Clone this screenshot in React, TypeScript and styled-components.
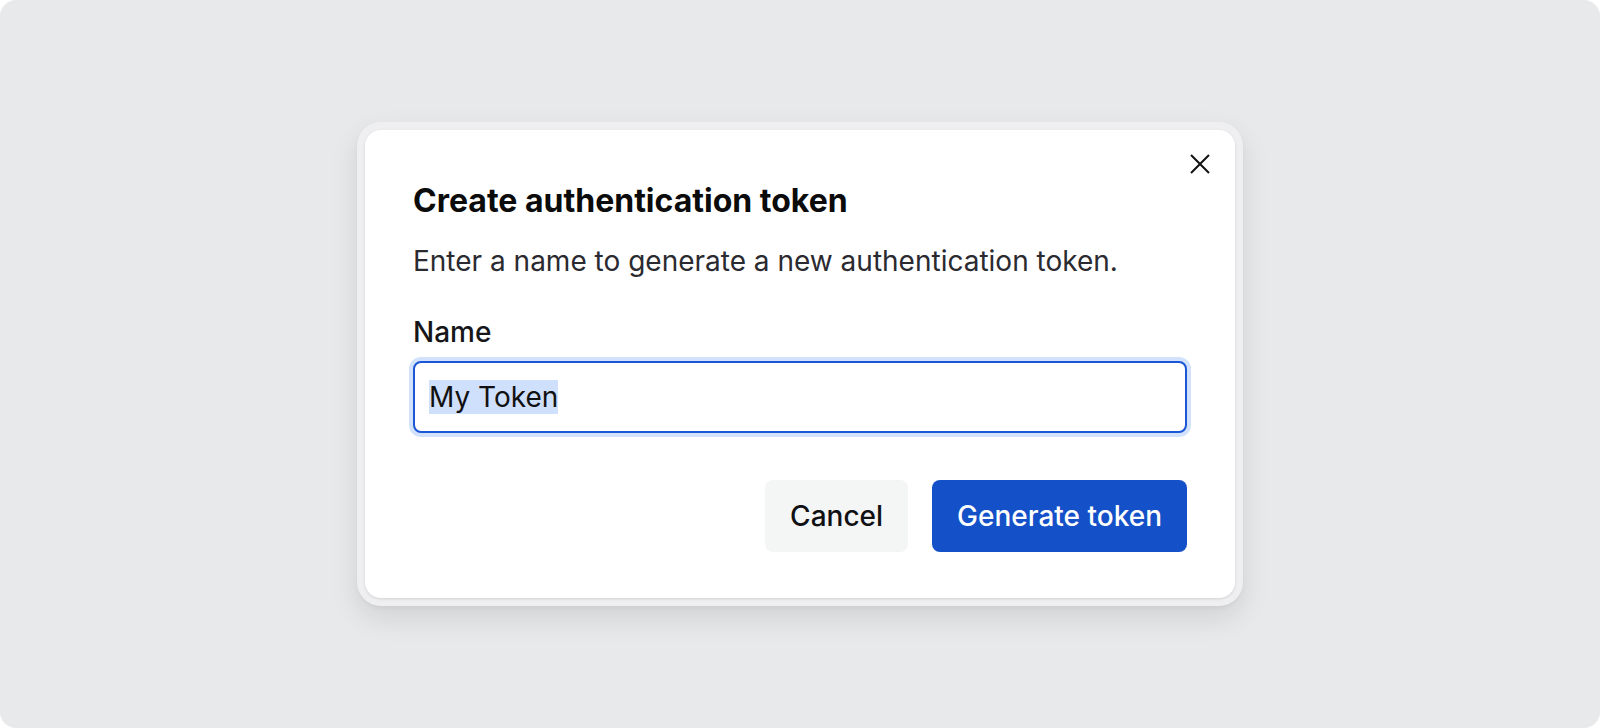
import React from "react";
import styled, { createGlobalStyle } from "styled-components";

const Global = createGlobalStyle`
  html, body { margin: 0; padding: 0; background: #ffffff; }
  body { font-family: Inter, "Noto Sans", sans-serif; }
  * { box-sizing: border-box; }
  #root { width: 1600px; height: 728px; }
  ::selection { background: #cfe0fd; color: #111; }
`;

const Canvas = styled.div`
  width: 1600px;
  height: 728px;
  background: #e8e9eb;
  border-radius: 16px;
  display: flex;
  align-items: center;
  justify-content: center;
`;

const Frame = styled.div`
  padding: 8px;
  border-radius: 24px;
  background: #efeff1;
  box-shadow: 0 12px 28px rgba(0, 0, 0, 0.1), 0 2px 4px rgba(0, 0, 0, 0.04);
`;

const Dialog = styled.div`
  position: relative;
  width: 870px;
  background: #ffffff;
  border-radius: 16px;
  padding: 51px 48px 46px;
  box-shadow: 0 1px 3px rgba(0, 0, 0, 0.12);
  display: flex;
  flex-direction: column;
`;

const CloseButton = styled.button`
  position: absolute;
  top: 21px;
  right: 22px;
  width: 26px;
  height: 26px;
  padding: 0;
  border: none;
  background: transparent;
  display: flex;
  align-items: center;
  justify-content: center;
  cursor: pointer;
`;

const Title = styled.h2`
  margin: 0;
  font-size: 32px;
  line-height: 40px;
  font-weight: 700;
  color: #0b0b0c;
`;

const Description = styled.p`
  margin: 20px 0 0;
  font-size: 28px;
  line-height: 40px;
  color: #2a2a30;
`;

const Label = styled.label`
  margin-top: 31px;
  font-size: 28px;
  line-height: 40px;
  font-weight: 500;
  color: #16161a;
`;

const Input = styled.input`
  margin-top: 9px;
  height: 72px;
  width: 100%;
  border: 2px solid #1a56d6;
  border-radius: 8px;
  box-shadow: 0 0 0 4px #d3e2fc;
  padding: 0 14px;
  font-family: Inter, "Noto Sans", sans-serif;
  font-size: 28px;
  color: #111;
  outline: none;
  background: #fff;
`;

const Actions = styled.div`
  margin-top: 47px;
  display: flex;
  justify-content: flex-end;
  gap: 24px;
`;

const Button = styled.button<{ $primary?: boolean }>`
  height: 72px;
  padding: 0 25px;
  border: none;
  border-radius: 8px;
  font-family: Inter, "Noto Sans", sans-serif;
  font-size: 28px;
  font-weight: 500;
  cursor: pointer;
  background: ${(p) => (p.$primary ? "#1450c8" : "#f4f5f5")};
  color: ${(p) => (p.$primary ? "#ffffff" : "#111114")};
`;

export default function App() {
  const ref = React.useRef<HTMLInputElement>(null);
  React.useEffect(() => {
    const el = ref.current;
    if (el) {
      el.focus();
      el.select();
    }
  }, []);
  return (
    <>
      <Global />
      <Canvas>
        <Frame>
          <Dialog>
            <CloseButton aria-label="Close">
              <svg width="20" height="20" viewBox="0 0 20 20" fill="none">
                <path d="M1 1L19 19M19 1L1 19" stroke="#111" strokeWidth="2" />
              </svg>
            </CloseButton>
            <Title>Create authentication token</Title>
            <Description>Enter a name to generate a new authentication token.</Description>
            <Label htmlFor="token-name">Name</Label>
            <Input id="token-name" ref={ref} defaultValue="My Token" />
            <Actions>
              <Button>Cancel</Button>
              <Button $primary>Generate token</Button>
            </Actions>
          </Dialog>
        </Frame>
      </Canvas>
    </>
  );
}
